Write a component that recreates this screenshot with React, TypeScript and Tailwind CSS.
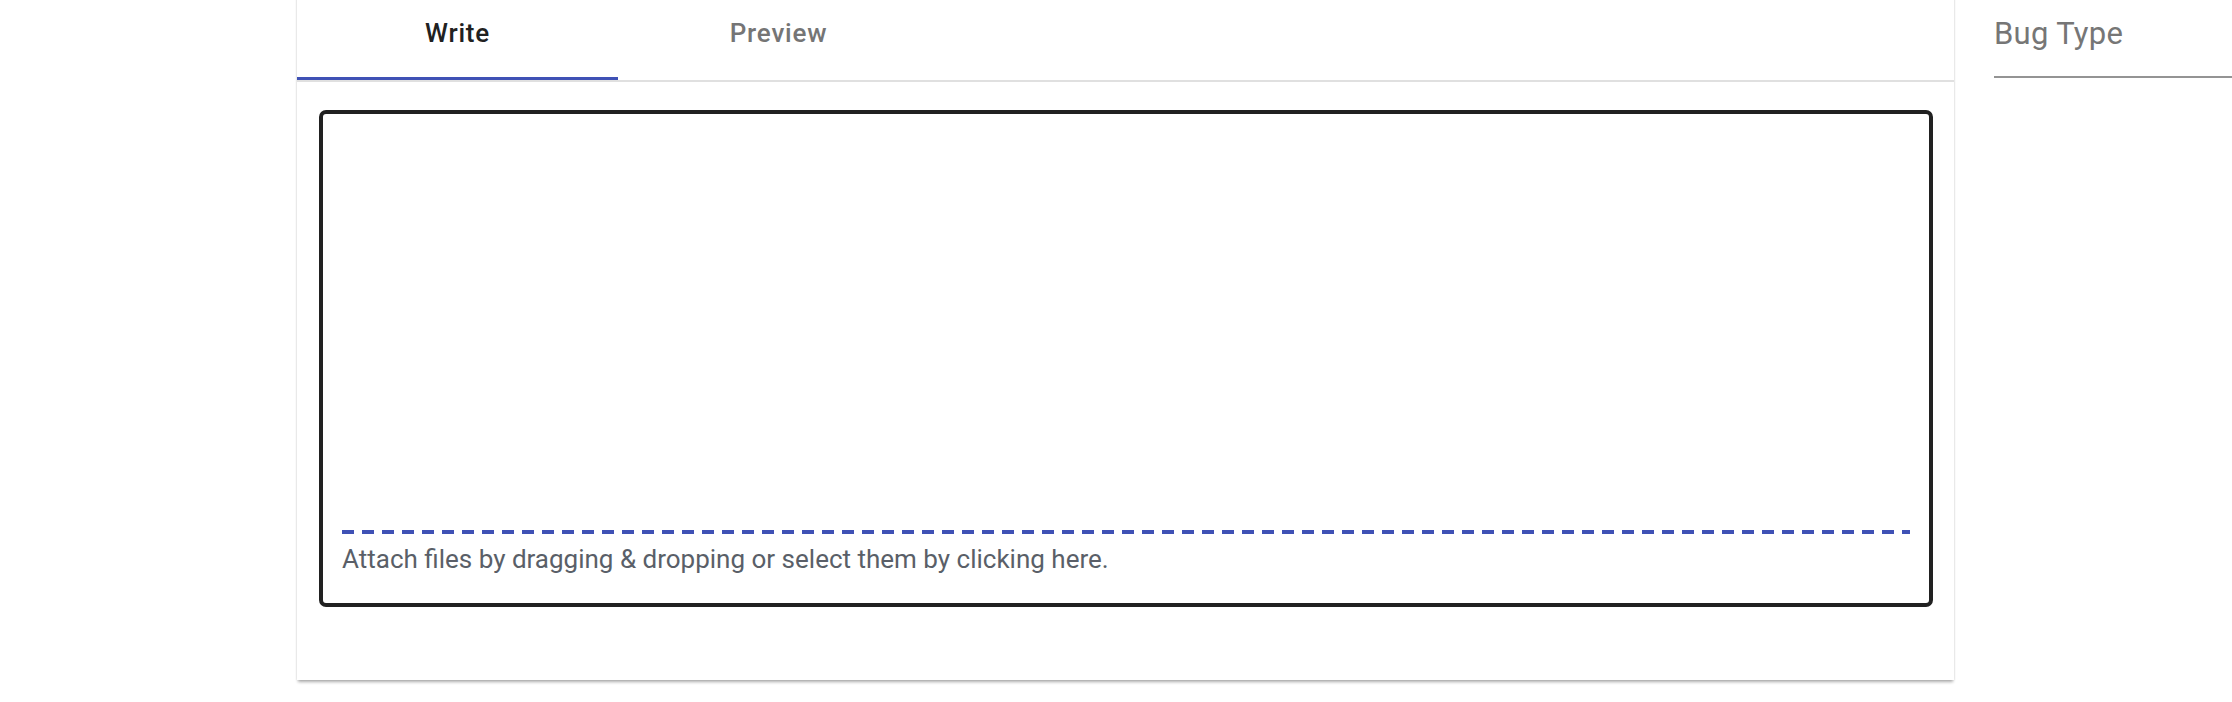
export default function App() {
  return (
    <div className="w-[2232px] h-[702px] overflow-hidden bg-white flex items-start font-['Roboto',sans-serif]">
      <div className="ml-[297px] w-[1657px] shrink-0 -mt-4 bg-white flex flex-col pb-[73px] shadow-[0_3px_3px_-1px_rgba(0,0,0,0.32),0_0_2px_rgba(0,0,0,0.1)]">
        <div className="flex h-[98px] border-b-2 border-[#e0e0e0]">
          <div className="w-[321px] h-full pt-[30px] text-center text-[26px] leading-[1.5] tracking-[0.03em] font-medium text-[#212121] border-b-[3px] border-[#3f51b5]">
            Write
          </div>
          <div className="w-[321px] h-full pt-[30px] text-center text-[26px] leading-[1.5] tracking-[0.03em] font-medium text-[#757575]">
            Preview
          </div>
        </div>

        <div className="ml-[22px] mr-[21px] mt-[28px] h-[497px] border-4 border-[#212121] rounded-[7px] flex flex-col">
          <div className="h-[416px] shrink-0" />
          <div className="mx-[19px] h-[4px] bg-[repeating-linear-gradient(to_right,#3f51b5_0_12px,transparent_12px_20px)]" />
          <p className="mt-[6px] px-[19px] text-[26px] leading-[1.5] text-[#5a5f68]">
            Attach files by dragging &amp; dropping or select them by clicking here.
          </p>
        </div>
      </div>

      <div className="ml-[40px] w-[400px] shrink-0">
        <div className="h-[78px] pt-[15px] border-b-2 border-[#949494] text-[31px] leading-[1.2] tracking-[0.01em] text-[#767676]">
          Bug Type
        </div>
      </div>
    </div>
  );
}
